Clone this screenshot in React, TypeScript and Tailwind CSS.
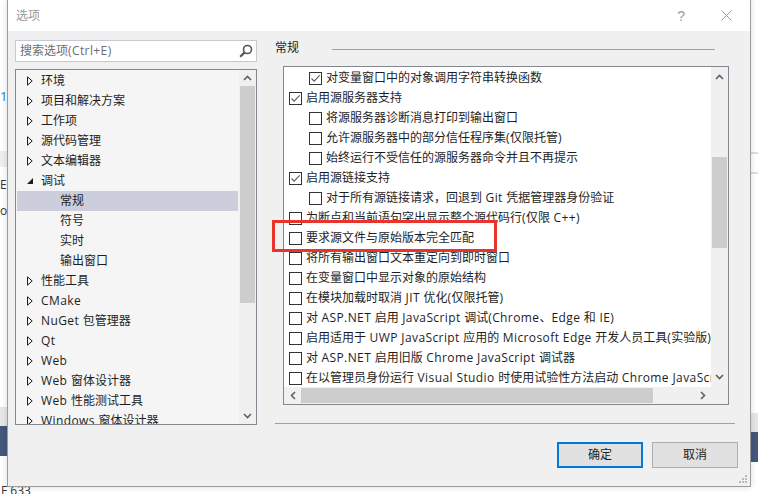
import React from "react";

const FONT = "font-['Open_Sans','Noto_Sans_CJK_SC',sans-serif]";

function Txt({ text }: { text: string }) {
  const parts = text.split(/([\u0000-\u024F]+)/).filter((p) => p.length > 0);
  return (
    <>
      {parts.map((p, i) =>
        /^[\u0000-\u024F]+$/.test(p) ? (
          <span key={i} className="tracking-[0.4px]">
            {p}
          </span>
        ) : (
          <span key={i}>{p}</span>
        )
      )}
    </>
  );
}

function ChevronUp() {
  return (
    <svg width="9" height="6" viewBox="0 0 9 6">
      <path d="M1 5 L4.5 1.5 L8 5" stroke="#606060" strokeWidth="1.6" fill="none" />
    </svg>
  );
}
function ChevronDown() {
  return (
    <svg width="9" height="6" viewBox="0 0 9 6">
      <path d="M1 1 L4.5 4.5 L8 1" stroke="#606060" strokeWidth="1.6" fill="none" />
    </svg>
  );
}
function ChevronLeft() {
  return (
    <svg width="6" height="9" viewBox="0 0 6 9">
      <path d="M5 1 L1.5 4.5 L5 8" stroke="#606060" strokeWidth="1.6" fill="none" />
    </svg>
  );
}
function ChevronRight() {
  return (
    <svg width="6" height="9" viewBox="0 0 6 9">
      <path d="M1 1 L4.5 4.5 L1 8" stroke="#606060" strokeWidth="1.6" fill="none" />
    </svg>
  );
}

type TreeKind = "collapsed" | "expanded" | "child";
const treeItems: { label: string; kind: TreeKind; selected?: boolean }[] = [
  { label: "环境", kind: "collapsed" },
  { label: "项目和解决方案", kind: "collapsed" },
  { label: "工作项", kind: "collapsed" },
  { label: "源代码管理", kind: "collapsed" },
  { label: "文本编辑器", kind: "collapsed" },
  { label: "调试", kind: "expanded" },
  { label: "常规", kind: "child", selected: true },
  { label: "符号", kind: "child" },
  { label: "实时", kind: "child" },
  { label: "输出窗口", kind: "child" },
  { label: "性能工具", kind: "collapsed" },
  { label: "CMake", kind: "collapsed" },
  { label: "NuGet 包管理器", kind: "collapsed" },
  { label: "Qt", kind: "collapsed" },
  { label: "Web", kind: "collapsed" },
  { label: "Web 窗体设计器", kind: "collapsed" },
  { label: "Web 性能测试工具", kind: "collapsed" },
  { label: "Windows 窗体设计器", kind: "collapsed" },
];

function TreeRow({ label, kind, selected }: { label: string; kind: TreeKind; selected?: boolean }) {
  return (
    <div
      className={`h-[20px] shrink-0 flex items-center mx-[1px] ${selected ? "bg-[#cccedb]" : ""}`}
    >
      <div className="w-[24px] h-[20px] flex items-center pl-[10px]">
        {kind === "collapsed" && (
          <svg width="6" height="10" viewBox="0 0 6 10">
            <path d="M0.5 0.8 L5.2 5 L0.5 9.2 Z" stroke="#1e1e1e" strokeWidth="1" fill="none" />
          </svg>
        )}
        {kind === "expanded" && (
          <svg width="6" height="6" viewBox="0 0 6 6">
            <path d="M6 0 L6 6 L0 6 Z" fill="#1e1e1e" />
          </svg>
        )}
      </div>
      <span
        className={`text-[12px] leading-[20px] text-[#1e1e1e] whitespace-nowrap ${
          kind === "child" ? "pl-[19px]" : ""
        }`}
      >
        <Txt text={label} />
      </span>
    </div>
  );
}

const options: { label: string; indent?: boolean; checked?: boolean }[] = [
  { label: "对变量窗口中的对象调用字符串转换函数", indent: true, checked: true },
  { label: "启用源服务器支持", checked: true },
  { label: "将源服务器诊断消息打印到输出窗口", indent: true },
  { label: "允许源服务器中的部分信任程序集(仅限托管)", indent: true },
  { label: "始终运行不受信任的源服务器命令并且不再提示", indent: true },
  { label: "启用源链接支持", checked: true },
  { label: "对于所有源链接请求，回退到 Git 凭据管理器身份验证", indent: true },
  { label: "为断点和当前语句突出显示整个源代码行(仅限 C++)" },
  { label: "要求源文件与原始版本完全匹配" },
  { label: "将所有输出窗口文本重定向到即时窗口" },
  { label: "在变量窗口中显示对象的原始结构" },
  { label: "在模块加载时取消 JIT 优化(仅限托管)" },
  { label: "对 ASP.NET 启用 JavaScript 调试(Chrome、Edge 和 IE)" },
  { label: "启用适用于 UWP JavaScript 应用的 Microsoft Edge 开发人员工具(实验版)" },
  { label: "对 ASP.NET 启用旧版 Chrome JavaScript 调试器" },
  { label: "在以管理员身份运行 Visual Studio 时使用试验性方法启动 Chrome JavaScript 调试器" },
];

function Checkbox({ checked }: { checked?: boolean }) {
  return (
    <div className="w-[13px] h-[13px] shrink-0 border border-[#333333] bg-white flex items-center justify-center">
      {checked && (
        <svg width="11" height="11" viewBox="0 0 11 11">
          <path d="M1.5 5.5 L4.2 8.2 L9.6 2.4" stroke="#5a5a5a" strokeWidth="1.1" fill="none" />
        </svg>
      )}
    </div>
  );
}

function OptionRow({ label, indent, checked }: { label: string; indent?: boolean; checked?: boolean }) {
  return (
    <div className={`h-[20px] shrink-0 flex items-center ${indent ? "pl-[25px]" : "pl-[5px]"}`}>
      <Checkbox checked={checked} />
      <span className="ml-[4px] text-[12px] leading-[20px] text-[#1e1e1e] whitespace-nowrap">
        <Txt text={label} />
      </span>
    </div>
  );
}

export default function App() {
  return (
    <div className={`relative w-[758px] h-[494px] bg-white overflow-hidden ${FONT}`}>
      {/* Background application visible around the dialog */}
      <div className="flex h-full">
        <div className="w-[7px] h-full flex flex-col bg-white overflow-hidden">
          <div className="h-[88px]" />
          <div className="h-[16px] text-[13px] leading-[16px] text-[#2a7ad4] whitespace-nowrap">1</div>
          <div className="h-[47px]" />
          <div className="h-[16px] bg-[#eeeeee]" />
          <div className="h-[10px]" />
          <div className="h-[16px] text-[12px] leading-[16px] text-[#333] whitespace-nowrap">E</div>
          <div className="h-[10px]" />
          <div className="h-[16px] text-[12px] leading-[16px] text-[#333] whitespace-nowrap">o</div>
          <div className="h-[188px]" />
          <div className="h-[19px] bg-[#e6e6e6]" />
          <div className="h-[30px] bg-[#44577c]" />
        </div>
        <div className="flex-1" />
        <div className="w-[8px] h-full flex flex-col bg-white">
          <div className="h-[152px]" />
          <div className="h-[2px] bg-[#dddddd]" />
          <div className="h-[18px]" />
          <div className="h-[2px] bg-[#dddddd]" />
          <div className="h-[239px]" />
          <div className="h-[19px] bg-[#e6e6e6]" />
          <div className="h-[30px] bg-[#44577c]" />
        </div>
      </div>
      <div className="absolute left-0 top-[484px] pl-[1px] text-[12px] leading-[14px] text-[#333] whitespace-nowrap">F 633</div>

      {/* Dialog window */}
      <div className="absolute left-[7px] top-[-1px] w-[744px] h-[488px] border border-[#9c9c9c] bg-[#f0f0f0] flex flex-col shadow-[0_0_6px_rgba(0,0,0,0.15)]">
        {/* Title bar */}
        <div className="h-[31px] shrink-0 bg-white flex items-center pl-[8px]">
          <span className="text-[12px] text-[#999999] leading-[16px]">选项</span>
          <div className="flex-1" />
          <span className="text-[14px] text-[#9a9a9a] leading-[16px] font-['Liberation_Sans',sans-serif] mr-[36px]">?</span>
          <svg width="11" height="11" viewBox="0 0 11 11" className="mr-[18px]">
            <path d="M0.5 0.5 L10.5 10.5 M10.5 0.5 L0.5 10.5" stroke="#9a9a9a" strokeWidth="1" />
          </svg>
        </div>

        {/* Body */}
        <div className="flex-1 flex flex-col">
          <div className="flex pl-[7px]">
            {/* Left column */}
            <div className="w-[242px] shrink-0 pt-[9px] flex flex-col">
              <div className="h-[22px] border border-[#c5c9d2] bg-white flex items-center pl-[4px] pr-[3px]">
                <span className="text-[12px] text-[#6d6d6d] leading-[16px] flex-1">
                  <Txt text="搜索选项(Ctrl+E)" />
                </span>
                <svg width="14" height="14" viewBox="0 0 14 14">
                  <circle cx="8.5" cy="5.5" r="4" stroke="#555555" strokeWidth="1.6" fill="none" />
                  <path d="M5.6 8.4 L1.2 12.8" stroke="#555555" strokeWidth="2.2" />
                </svg>
              </div>
              <div className="mt-[7px] h-[356px] border border-[#828790] bg-[#f5f5f5] flex">
                <div className="flex-1 flex flex-col overflow-hidden pt-[1px]">
                  {treeItems.map((t) => (
                    <TreeRow key={t.label} label={t.label} kind={t.kind} selected={t.selected} />
                  ))}
                </div>
                <div className="w-[17px] shrink-0 bg-[#f0f0f0] flex flex-col items-center">
                  <div className="h-[16px] flex items-center justify-center">
                    <ChevronUp />
                  </div>
                  <div className="w-[15px] h-[217px] bg-[#cdcdcd]" />
                  <div className="flex-1" />
                  <div className="h-[17px] flex items-center justify-center">
                    <ChevronDown />
                  </div>
                </div>
              </div>
            </div>

            {/* Right column */}
            <div className="ml-[18px] w-[460px] shrink-0 pt-[9px] flex flex-col">
              <div className="h-[16px] flex items-center">
                <span className="text-[12px] text-[#1e1e1e] leading-[16px]">常规</span>
                <div className="ml-[33px] w-[383px] h-[1px] bg-[#a0a0a0] mt-[2px]" />
              </div>
              <div className="ml-[8px] mt-[10px] w-[446px] h-[339px] border border-[#828790] bg-white flex flex-col">
                <div className="flex h-[320px]">
                  <div className="flex-1 flex flex-col overflow-hidden pt-[1px]">
                    {options.map((o) => (
                      <OptionRow key={o.label} label={o.label} indent={o.indent} checked={o.checked} />
                    ))}
                  </div>
                  <div className="w-[17px] shrink-0 bg-[#f0f0f0] flex flex-col items-center">
                    <div className="h-[20px] flex items-center justify-center">
                      <ChevronUp />
                    </div>
                    <div className="mt-[70px] w-[15px] h-[91px] bg-[#cdcdcd]" />
                    <div className="flex-1" />
                    <div className="h-[20px] flex items-center justify-center">
                      <ChevronDown />
                    </div>
                  </div>
                </div>
                <div className="flex-1 flex bg-[#f0f0f0]">
                  <div className="w-[17px] flex items-center justify-center">
                    <ChevronLeft />
                  </div>
                  <div className="w-[352px] h-[15px] self-center bg-[#cdcdcd]" />
                  <div className="flex-1 flex items-center justify-end pr-[5px]">
                    <ChevronRight />
                  </div>
                  <div className="w-[17px]" />
                </div>
              </div>
              <div className="mt-[18px] h-[1px] bg-[#a0a0a0]" />
            </div>
          </div>

          {/* Buttons */}
          <div className="mt-[17px] flex justify-end pr-[12px] gap-[9px]">
            <div className="w-[86px] h-[26px] border-2 border-[#0078d7] bg-[#e1e1e1] flex items-center justify-center">
              <span className="text-[12px] text-[#1e1e1e] leading-[16px]">确定</span>
            </div>
            <div className="w-[86px] h-[26px] border border-[#adadad] bg-[#e1e1e1] flex items-center justify-center">
              <span className="text-[12px] text-[#1e1e1e] leading-[16px]">取消</span>
            </div>
          </div>
        </div>

        {/* Size grip */}
        <svg width="10" height="10" viewBox="0 0 10 10" className="absolute right-[2px] bottom-[2px]">
          <rect x="7" y="1" width="2" height="2" fill="#b8b8b8" />
          <rect x="4" y="4" width="2" height="2" fill="#b8b8b8" />
          <rect x="7" y="4" width="2" height="2" fill="#b8b8b8" />
          <rect x="1" y="7" width="2" height="2" fill="#b8b8b8" />
          <rect x="4" y="7" width="2" height="2" fill="#b8b8b8" />
          <rect x="7" y="7" width="2" height="2" fill="#b8b8b8" />
        </svg>

        {/* Red highlight annotation */}
        <div className="absolute left-[264px] top-[220px] w-[225px] h-[32px] border-[3px] border-[#e8342c]" />
      </div>
    </div>
  );
}
